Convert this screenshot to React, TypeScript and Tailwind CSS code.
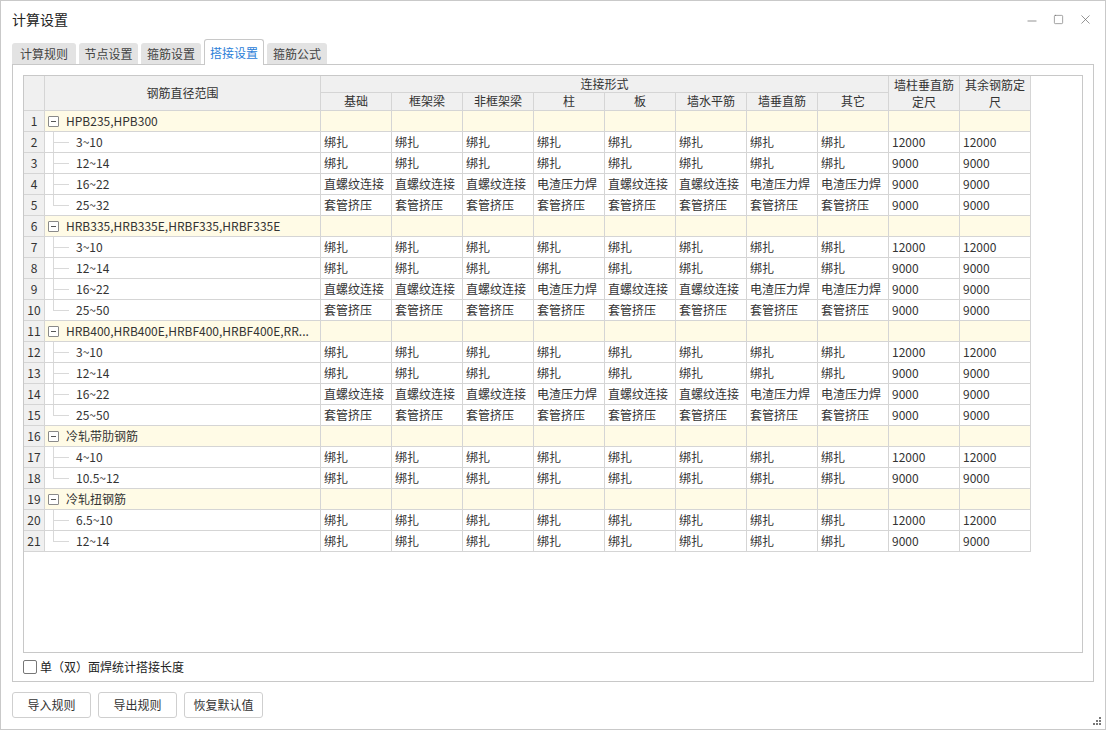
import { Minus, Square, X } from "lucide-react";

type Row =
  | { kind: "group"; label: string }
  | { kind: "item"; label: string; cells: string[]; last: boolean };

const A = ["绑扎", "绑扎", "绑扎", "绑扎", "绑扎", "绑扎", "绑扎", "绑扎"];
const B = ["直螺纹连接", "直螺纹连接", "直螺纹连接", "电渣压力焊", "直螺纹连接", "直螺纹连接", "电渣压力焊", "电渣压力焊"];
const C = ["套管挤压", "套管挤压", "套管挤压", "套管挤压", "套管挤压", "套管挤压", "套管挤压", "套管挤压"];

const big = ["12000", "12000"];
const small = ["9000", "9000"];

const ROWS: Row[] = [
  { kind: "group", label: "HPB235,HPB300" },
  { kind: "item", label: "3~10", cells: [...A, ...big], last: false },
  { kind: "item", label: "12~14", cells: [...A, ...small], last: false },
  { kind: "item", label: "16~22", cells: [...B, ...small], last: false },
  { kind: "item", label: "25~32", cells: [...C, ...small], last: true },
  { kind: "group", label: "HRB335,HRB335E,HRBF335,HRBF335E" },
  { kind: "item", label: "3~10", cells: [...A, ...big], last: false },
  { kind: "item", label: "12~14", cells: [...A, ...small], last: false },
  { kind: "item", label: "16~22", cells: [...B, ...small], last: false },
  { kind: "item", label: "25~50", cells: [...C, ...small], last: true },
  { kind: "group", label: "HRB400,HRB400E,HRBF400,HRBF400E,RR..." },
  { kind: "item", label: "3~10", cells: [...A, ...big], last: false },
  { kind: "item", label: "12~14", cells: [...A, ...small], last: false },
  { kind: "item", label: "16~22", cells: [...B, ...small], last: false },
  { kind: "item", label: "25~50", cells: [...C, ...small], last: true },
  { kind: "group", label: "冷轧带肋钢筋" },
  { kind: "item", label: "4~10", cells: [...A, ...big], last: false },
  { kind: "item", label: "10.5~12", cells: [...A, ...small], last: true },
  { kind: "group", label: "冷轧扭钢筋" },
  { kind: "item", label: "6.5~10", cells: [...A, ...big], last: false },
  { kind: "item", label: "12~14", cells: [...A, ...small], last: true },
];

const SUB_HEADS = ["基础", "框架梁", "非框架梁", "柱", "板", "墙水平筋", "墙垂直筋", "其它"];
const TABS = [
  { label: "计算规则", w: "w-[64px]" },
  { label: "节点设置", w: "w-[59px]" },
  { label: "箍筋设置", w: "w-[60px]" },
  { label: "搭接设置", w: "w-[60px]" },
  { label: "箍筋公式", w: "w-[60px]" },
];

const cellBorder = "border border-[#d5d5d5]";

function TreeCell({ row }: { row: Row }) {
  if (row.kind === "group") {
    return (
      <div className="flex items-center h-full pl-[3px]">
        <span className="w-[11px] h-[11px] border border-[#8a8a8a] flex items-center justify-center bg-white rounded-[1px]">
          <span className="w-[5px] h-px bg-[#555]" />
        </span>
        <span className="ml-[7px] whitespace-nowrap">{row.label}</span>
      </div>
    );
  }
  return (
    <div className="relative flex items-center h-full">
      <span
        className={`absolute left-[8px] top-0 w-px bg-[#d9d9d9] ${row.last ? "h-1/2" : "h-full"}`}
      />
      <span className="absolute left-[8px] top-1/2 w-[16px] h-px bg-[#d9d9d9]" />
      <span className="ml-[31px]">{row.label}</span>
    </div>
  );
}

export default function App() {
  return (
    <div
      className="w-[1106px] h-[730px] bg-white border border-[#c9c9c9] relative flex flex-col text-[#333] text-[12px]"
      style={{ fontFamily: '"Microsoft YaHei", "Noto Sans CJK SC", sans-serif' }}
    >
      {/* title bar */}
      <div className="h-[37px] flex items-center pl-[11px] pr-[12px]">
        <span className="text-[14px] text-[#222]">计算设置</span>
        <div className="ml-auto flex items-center gap-[14px] text-[#666]">
          <Minus size={14} strokeWidth={1.2} className="mt-[3px]" />
          <Square size={11} strokeWidth={1.3} />
          <X size={15} strokeWidth={1.1} />
        </div>
      </div>

      {/* tabs */}
      <div className="flex items-end h-[26px] pl-[11px] gap-[3px]">
        {TABS.map((t, i) =>
          i === 3 ? (
            <div
              key={t.label}
              className={`${t.w} h-[26px] flex items-center justify-center bg-white border border-b-0 border-[#c8c8c8] rounded-t-[3px] text-[#2b80d8] relative top-px z-10`}
            >
              {t.label}
            </div>
          ) : (
            <div
              key={t.label}
              className={`${t.w} h-[21px] flex items-center justify-center bg-[#e3e3e3] rounded-t-[3px] text-[#444]`}
            >
              {t.label}
            </div>
          )
        )}
      </div>

      {/* tab panel */}
      <div className="mx-[11px] h-[618px] border border-[#c8c8c8] flex flex-col px-[10px] pt-[10px]">
        <div className="h-[578px] border border-[#c8c8c8] overflow-hidden">
          <table className="border-collapse table-fixed -mt-px -ml-px">
            <colgroup>
              <col className="w-[21px]" />
              <col className="w-[276px]" />
              {Array.from({ length: 10 }).map((_, i) => (
                <col key={i} className="w-[71px]" />
              ))}
            </colgroup>
            <thead>
              <tr className="h-[16px] bg-[#f0f0f0]">
                <th rowSpan={2} className={`${cellBorder} font-normal`} />
                <th rowSpan={2} className={`${cellBorder} font-normal`}>
                  钢筋直径范围
                </th>
                <th colSpan={8} className={`${cellBorder} font-normal leading-[15px]`}>
                  连接形式
                </th>
                <th rowSpan={2} className={`${cellBorder} font-normal leading-[17px]`}>
                  墙柱垂直筋
                  <br />
                  定尺
                </th>
                <th rowSpan={2} className={`${cellBorder} font-normal leading-[17px]`}>
                  其余钢筋定
                  <br />
                  尺
                </th>
              </tr>
              <tr className="h-[17px] bg-[#f0f0f0]">
                {SUB_HEADS.map((h) => (
                  <th key={h} className={`${cellBorder} font-normal leading-[16px]`}>
                    {h}
                  </th>
                ))}
              </tr>
            </thead>
            <tbody>
              {ROWS.map((row, i) => (
                <tr key={i} className={`h-[21px] ${row.kind === "group" ? "bg-[#fffbe6]" : "bg-white"}`}>
                  <td className={`${cellBorder} bg-[#f0f0f0] text-center p-0 leading-[20px]`}>{i + 1}</td>
                  <td className={`${cellBorder} p-0 h-[21px]`}>
                    <TreeCell row={row} />
                  </td>
                  {Array.from({ length: 10 }).map((_, j) => (
                    <td key={j} className={`${cellBorder} pl-[3px] p-0 whitespace-nowrap leading-[20px]`}>
                      {row.kind === "item" ? row.cells[j] : ""}
                    </td>
                  ))}
                </tr>
              ))}
            </tbody>
          </table>
        </div>

        <label className="flex items-center mt-[6px] h-[16px]">
          <span className="w-[14px] h-[14px] border border-[#777] rounded-[2px] bg-white" />
          <span className="ml-[3px] text-[#222]">单（双）面焊统计搭接长度</span>
        </label>
      </div>

      {/* buttons */}
      <div className="flex gap-[7px] pl-[11px] mt-[10px]">
        {["导入规则", "导出规则", "恢复默认值"].map((b) => (
          <button
            key={b}
            className="w-[79px] h-[26px] border border-[#cfcfcf] rounded-[3px] bg-white text-[#333] text-[12px]"
          >
            {b}
          </button>
        ))}
      </div>

      {/* resize grip */}
      <svg className="absolute right-[3px] bottom-[3px]" width="9" height="9" viewBox="0 0 9 9">
        <rect x="6" y="0" width="2" height="2" fill="#777" />
        <rect x="3" y="3" width="2" height="2" fill="#777" />
        <rect x="6" y="3" width="2" height="2" fill="#777" />
        <rect x="0" y="6" width="2" height="2" fill="#777" />
        <rect x="3" y="6" width="2" height="2" fill="#777" />
        <rect x="6" y="6" width="2" height="2" fill="#777" />
      </svg>
    </div>
  );
}
